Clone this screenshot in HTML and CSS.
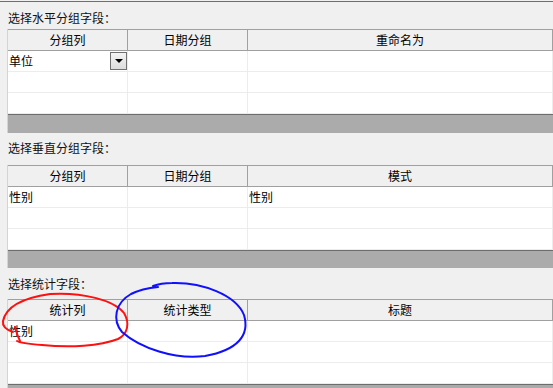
FILE: index.html
```html
<!DOCTYPE html>
<html lang="zh-CN">

<head>
  <meta charset="UTF-8">
  <meta name="viewport" content="width=device-width, initial-scale=1.0">
  <title>分组字段</title>
  <link rel="stylesheet" href="styles.css">
</head>

<body>
  <div id="form">
    <div class="topline"></div>

    <div class="caption cap-1">选择水平分组字段：</div>
    <div class="grid">
      <div class="row head">
        <div class="cell">分组列</div>
        <div class="cell">日期分组</div>
        <div class="cell">重命名为</div>
      </div>
      <div class="row">
        <div class="cell combo">单位<span class="drop"></span></div>
        <div class="cell"></div>
        <div class="cell"></div>
      </div>
      <div class="row">
        <div class="cell"></div>
        <div class="cell"></div>
        <div class="cell"></div>
      </div>
      <div class="row">
        <div class="cell"></div>
        <div class="cell"></div>
        <div class="cell"></div>
      </div>
      <div class="workspace ws-1"></div>
    </div>

    <div class="caption cap-2">选择垂直分组字段：</div>
    <div class="grid">
      <div class="row head">
        <div class="cell">分组列</div>
        <div class="cell">日期分组</div>
        <div class="cell">模式</div>
      </div>
      <div class="row">
        <div class="cell">性别</div>
        <div class="cell"></div>
        <div class="cell">性别</div>
      </div>
      <div class="row">
        <div class="cell"></div>
        <div class="cell"></div>
        <div class="cell"></div>
      </div>
      <div class="row">
        <div class="cell"></div>
        <div class="cell"></div>
        <div class="cell"></div>
      </div>
      <div class="workspace ws-2"></div>
    </div>

    <div class="caption cap-3">选择统计字段：</div>
    <div class="grid">
      <div class="row head">
        <div class="cell">统计列</div>
        <div class="cell">统计类型</div>
        <div class="cell">标题</div>
      </div>
      <div class="row">
        <div class="cell">性别</div>
        <div class="cell"></div>
        <div class="cell"></div>
      </div>
      <div class="row">
        <div class="cell"></div>
        <div class="cell"></div>
        <div class="cell"></div>
      </div>
      <div class="row">
        <div class="cell"></div>
        <div class="cell"></div>
        <div class="cell"></div>
      </div>
      <div class="workspace ws-3"></div>
    </div>

    <!-- hand-drawn marks over the third grid -->
    <svg class="marks" width="553" height="388" viewBox="0 0 553 388">
      <path class="red" d="M13,332 C7,330 2,327 3,321 C6,307 22,298 50,294 C82,292 114,300 124,313 C130,323 128,334 118,339 C100,346 70,348 42,345 C30,344 20,343 17,341 M15,327 Q17,335 20,341" />
      <path class="blue" d="M153,286 Q161,283 172,283 C202,282 236,295 244,315 C250,335 238,350 205,356 C175,360 140,348 122,332 C112,320 115,303 131,294 C139,290 148,288 158,287" />
    </svg>
  </div>
</body>

</html>
```

FILE: styles.css
```css
* {
  margin: 0;
  padding: 0;
  box-sizing: border-box;
}

html,
body {
  width: 553px;
  height: 388px;
  overflow: hidden;
  background: #f0f0f0;
}

#form {
  position: relative;
  width: 553px;
  height: 388px;
  overflow: hidden;
  display: flex;
  flex-direction: column;
  font-family: "Noto Sans CJK SC", "DejaVu Sans", sans-serif;
  font-size: 12px;
  color: #000;
}

.topline {
  height: 2px;
  border-top: 1px solid #f0f0f0;
  background: #6e6e6e;
  flex: none;
}

.caption {
  flex: none;
  padding-left: 8px;
  line-height: 14px;
  color: #111;
}

.cap-1 {
  height: 27px;
  padding-top: 9px;
}

.cap-2 {
  height: 32px;
  padding-top: 8px;
}

.cap-3 {
  height: 31px;
  padding-top: 9px;
}

.grid {
  flex: none;
  margin-left: 7px;
  border-left: 1px solid #d4d4d4;
  display: flex;
  flex-direction: column;
}

.grid:last-of-type {
  flex: 1;
}

.row {
  display: grid;
  grid-template-columns: 120px 120px 1fr;
  height: 21px;
  background: #fff;
  border-bottom: 1px solid #ececec;
}

.row .cell {
  border-right: 1px solid #ececec;
  line-height: 20px;
  padding-left: 1px;
  white-space: nowrap;
  position: relative;
}

.row.head {
  height: 22px;
  background: #f0f0f0;
  border-top: 1px solid #a0a0a0;
  border-bottom: 1px solid #a0a0a0;
}

.row.head .cell {
  border-right: 1px solid #a0a0a0;
  text-align: center;
  padding-left: 0;
}

.combo .drop {
  position: absolute;
  left: 102px;
  top: 1px;
  width: 17px;
  height: 18px;
  border: 1px solid #707070;
  background: linear-gradient(#f4f4f4, #dcdcdc);
}

.combo .drop::after {
  content: "";
  position: absolute;
  left: 4px;
  top: 6px;
  border-left: 4px solid transparent;
  border-right: 4px solid transparent;
  border-top: 4px solid #000;
}

.workspace {
  background: #ababab;
  border-top: 1px solid #6d6d6d;
}

.ws-1 {
  height: 19px;
}

.ws-2 {
  height: 18px;
}

.ws-3 {
  flex: 1;
}

.marks {
  position: absolute;
  left: 0;
  top: 0;
  pointer-events: none;
}

.marks path {
  fill: none;
  stroke-width: 2;
  stroke-linecap: round;
  stroke-linejoin: round;
}

.marks .red {
  stroke: #ff1010;
}

.marks .blue {
  stroke: #1010ff;
}
```
